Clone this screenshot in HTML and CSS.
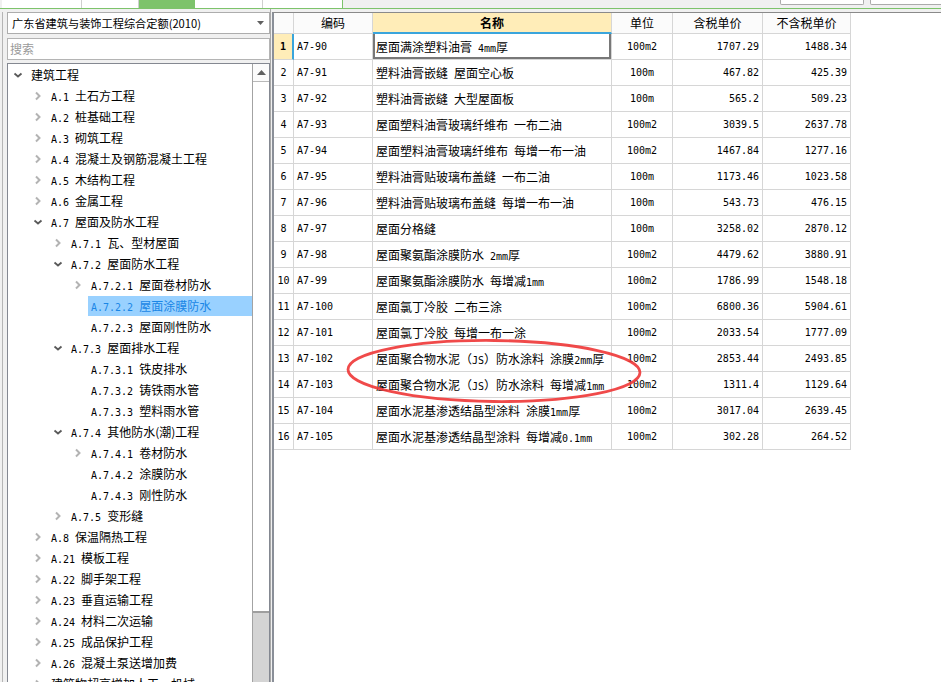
FILE: index.html
```html
<!DOCTYPE html>
<html lang="zh-CN">
<head>
<meta charset="utf-8">
<title>定额库</title>
<link rel="stylesheet" href="styles.css">
</head>
<body>
<div class="topbar">
  <div class="tabs">
    <div class="tab w80"></div>
    <div class="tab w57"></div>
    <div class="tab w56 active"></div>
    <div class="tab w68"></div>
    <div class="tab w80 last"></div>
  </div>
  <div class="topbtns">
    <div class="tbtn b1"></div>
    <div class="tbtn b2"></div>
  </div>
</div>
<div class="main">
  <div class="strip"><div class="strip-line"></div></div>
  <div class="left">
    <div class="select">
      <span class="select-text">广东省建筑与装饰工程综合定额(2010)</span>
      <svg class="select-arrow" width="7" height="4" viewBox="0 0 7 4"><path d="M0 0H7L3.5 4Z" fill="#606060"/></svg>
    </div>
    <div class="search">搜索</div>
    <div class="tree">
      <div class="tree-list">
        <div class="item l0"><svg class="chev" viewBox="0 0 10 10"><path class="open" d="M1.5 3.5L5 6.5L8.5 3.5"/></svg><span class="label">建筑工程</span></div>
        <div class="item l1"><svg class="chev" viewBox="0 0 10 10"><path class="closed" d="M3 1.5L6.5 5L3 8.5"/></svg><span class="label"><span class="m">A.1 </span>土石方工程</span></div>
        <div class="item l1"><svg class="chev" viewBox="0 0 10 10"><path class="closed" d="M3 1.5L6.5 5L3 8.5"/></svg><span class="label"><span class="m">A.2 </span>桩基础工程</span></div>
        <div class="item l1"><svg class="chev" viewBox="0 0 10 10"><path class="closed" d="M3 1.5L6.5 5L3 8.5"/></svg><span class="label"><span class="m">A.3 </span>砌筑工程</span></div>
        <div class="item l1"><svg class="chev" viewBox="0 0 10 10"><path class="closed" d="M3 1.5L6.5 5L3 8.5"/></svg><span class="label"><span class="m">A.4 </span>混凝土及钢筋混凝土工程</span></div>
        <div class="item l1"><svg class="chev" viewBox="0 0 10 10"><path class="closed" d="M3 1.5L6.5 5L3 8.5"/></svg><span class="label"><span class="m">A.5 </span>木结构工程</span></div>
        <div class="item l1"><svg class="chev" viewBox="0 0 10 10"><path class="closed" d="M3 1.5L6.5 5L3 8.5"/></svg><span class="label"><span class="m">A.6 </span>金属工程</span></div>
        <div class="item l1"><svg class="chev" viewBox="0 0 10 10"><path class="open" d="M1.5 3.5L5 6.5L8.5 3.5"/></svg><span class="label"><span class="m">A.7 </span>屋面及防水工程</span></div>
        <div class="item l2"><svg class="chev" viewBox="0 0 10 10"><path class="closed" d="M3 1.5L6.5 5L3 8.5"/></svg><span class="label"><span class="m">A.7.1 </span>瓦、型材屋面</span></div>
        <div class="item l2"><svg class="chev" viewBox="0 0 10 10"><path class="open" d="M1.5 3.5L5 6.5L8.5 3.5"/></svg><span class="label"><span class="m">A.7.2 </span>屋面防水工程</span></div>
        <div class="item l3"><svg class="chev" viewBox="0 0 10 10"><path class="closed" d="M3 1.5L6.5 5L3 8.5"/></svg><span class="label"><span class="m">A.7.2.1 </span>屋面卷材防水</span></div>
        <div class="item l3 sel"><span class="chev"></span><span class="label"><span class="m">A.7.2.2 </span>屋面涂膜防水</span></div>
        <div class="item l3"><span class="chev"></span><span class="label"><span class="m">A.7.2.3 </span>屋面刚性防水</span></div>
        <div class="item l2"><svg class="chev" viewBox="0 0 10 10"><path class="open" d="M1.5 3.5L5 6.5L8.5 3.5"/></svg><span class="label"><span class="m">A.7.3 </span>屋面排水工程</span></div>
        <div class="item l3"><span class="chev"></span><span class="label"><span class="m">A.7.3.1 </span>铁皮排水</span></div>
        <div class="item l3"><span class="chev"></span><span class="label"><span class="m">A.7.3.2 </span>铸铁雨水管</span></div>
        <div class="item l3"><span class="chev"></span><span class="label"><span class="m">A.7.3.3 </span>塑料雨水管</span></div>
        <div class="item l2"><svg class="chev" viewBox="0 0 10 10"><path class="open" d="M1.5 3.5L5 6.5L8.5 3.5"/></svg><span class="label"><span class="m">A.7.4 </span>其他防水(潮)工程</span></div>
        <div class="item l3"><svg class="chev" viewBox="0 0 10 10"><path class="closed" d="M3 1.5L6.5 5L3 8.5"/></svg><span class="label"><span class="m">A.7.4.1 </span>卷材防水</span></div>
        <div class="item l3"><span class="chev"></span><span class="label"><span class="m">A.7.4.2 </span>涂膜防水</span></div>
        <div class="item l3"><span class="chev"></span><span class="label"><span class="m">A.7.4.3 </span>刚性防水</span></div>
        <div class="item l2"><svg class="chev" viewBox="0 0 10 10"><path class="closed" d="M3 1.5L6.5 5L3 8.5"/></svg><span class="label"><span class="m">A.7.5 </span>变形缝</span></div>
        <div class="item l1"><svg class="chev" viewBox="0 0 10 10"><path class="closed" d="M3 1.5L6.5 5L3 8.5"/></svg><span class="label"><span class="m">A.8 </span>保温隔热工程</span></div>
        <div class="item l1"><svg class="chev" viewBox="0 0 10 10"><path class="closed" d="M3 1.5L6.5 5L3 8.5"/></svg><span class="label"><span class="m">A.21 </span>模板工程</span></div>
        <div class="item l1"><svg class="chev" viewBox="0 0 10 10"><path class="closed" d="M3 1.5L6.5 5L3 8.5"/></svg><span class="label"><span class="m">A.22 </span>脚手架工程</span></div>
        <div class="item l1"><svg class="chev" viewBox="0 0 10 10"><path class="closed" d="M3 1.5L6.5 5L3 8.5"/></svg><span class="label"><span class="m">A.23 </span>垂直运输工程</span></div>
        <div class="item l1"><svg class="chev" viewBox="0 0 10 10"><path class="closed" d="M3 1.5L6.5 5L3 8.5"/></svg><span class="label"><span class="m">A.24 </span>材料二次运输</span></div>
        <div class="item l1"><svg class="chev" viewBox="0 0 10 10"><path class="closed" d="M3 1.5L6.5 5L3 8.5"/></svg><span class="label"><span class="m">A.25 </span>成品保护工程</span></div>
        <div class="item l1"><svg class="chev" viewBox="0 0 10 10"><path class="closed" d="M3 1.5L6.5 5L3 8.5"/></svg><span class="label"><span class="m">A.26 </span>混凝土泵送增加费</span></div>
        <div class="item l1"><svg class="chev" viewBox="0 0 10 10"><path class="closed" d="M3 1.5L6.5 5L3 8.5"/></svg><span class="label">建筑物超高增加人工、机械</span></div>
      </div>
      <div class="vscroll">
        <div class="sb-up"><svg width="9" height="5" viewBox="0 0 9 5"><path d="M0 5L4.5 0L9 5Z" fill="#606060"/></svg></div>
        <div class="sb-thumb"></div>
        <div class="sb-track"></div>
      </div>
    </div>
  </div>
  <div class="splitter"></div>
  <div class="right">
    <div class="grid">
      <div class="c h"></div><div class="c h">编码</div><div class="c h hsel">名称</div><div class="c h">单位</div><div class="c h">含税单价</div><div class="c h">不含税单价</div>

      <div class="c rn rsel m">1</div><div class="c code m">A7-90</div><div class="c name focus">屋面满涂塑料油膏<span class="m"> 4mm</span>厚</div><div class="c unit m">100m2</div><div class="c num m">1707.29</div><div class="c num m">1488.34</div>
      <div class="c rn m">2</div><div class="c code m">A7-91</div><div class="c name">塑料油膏嵌缝<span class="m"> </span>屋面空心板</div><div class="c unit m">100m</div><div class="c num m">467.82</div><div class="c num m">425.39</div>
      <div class="c rn m">3</div><div class="c code m">A7-92</div><div class="c name">塑料油膏嵌缝<span class="m"> </span>大型屋面板</div><div class="c unit m">100m</div><div class="c num m">565.2</div><div class="c num m">509.23</div>
      <div class="c rn m">4</div><div class="c code m">A7-93</div><div class="c name">屋面塑料油膏玻璃纤维布<span class="m"> </span>一布二油</div><div class="c unit m">100m2</div><div class="c num m">3039.5</div><div class="c num m">2637.78</div>
      <div class="c rn m">5</div><div class="c code m">A7-94</div><div class="c name">屋面塑料油膏玻璃纤维布<span class="m"> </span>每增一布一油</div><div class="c unit m">100m2</div><div class="c num m">1467.84</div><div class="c num m">1277.16</div>
      <div class="c rn m">6</div><div class="c code m">A7-95</div><div class="c name">塑料油膏贴玻璃布盖缝<span class="m"> </span>一布二油</div><div class="c unit m">100m</div><div class="c num m">1173.46</div><div class="c num m">1023.58</div>
      <div class="c rn m">7</div><div class="c code m">A7-96</div><div class="c name">塑料油膏贴玻璃布盖缝<span class="m"> </span>每增一布一油</div><div class="c unit m">100m</div><div class="c num m">543.73</div><div class="c num m">476.15</div>
      <div class="c rn m">8</div><div class="c code m">A7-97</div><div class="c name">屋面分格缝</div><div class="c unit m">100m</div><div class="c num m">3258.02</div><div class="c num m">2870.12</div>
      <div class="c rn m">9</div><div class="c code m">A7-98</div><div class="c name">屋面聚氨酯涂膜防水<span class="m"> 2mm</span>厚</div><div class="c unit m">100m2</div><div class="c num m">4479.62</div><div class="c num m">3880.91</div>
      <div class="c rn m">10</div><div class="c code m">A7-99</div><div class="c name">屋面聚氨酯涂膜防水<span class="m"> </span>每增减<span class="m">1mm</span></div><div class="c unit m">100m2</div><div class="c num m">1786.99</div><div class="c num m">1548.18</div>
      <div class="c rn m">11</div><div class="c code m">A7-100</div><div class="c name">屋面氯丁冷胶<span class="m"> </span>二布三涂</div><div class="c unit m">100m2</div><div class="c num m">6800.36</div><div class="c num m">5904.61</div>
      <div class="c rn m">12</div><div class="c code m">A7-101</div><div class="c name">屋面氯丁冷胶<span class="m"> </span>每增一布一涂</div><div class="c unit m">100m2</div><div class="c num m">2033.54</div><div class="c num m">1777.09</div>
      <div class="c rn m">13</div><div class="c code m">A7-102</div><div class="c name">屋面聚合物水泥（<span class="m">JS</span>）防水涂料<span class="m"> </span>涂膜<span class="m">2mm</span>厚</div><div class="c unit m">100m2</div><div class="c num m">2853.44</div><div class="c num m">2493.85</div>
      <div class="c rn m">14</div><div class="c code m">A7-103</div><div class="c name">屋面聚合物水泥（<span class="m">JS</span>）防水涂料<span class="m"> </span>每增减<span class="m">1mm</span></div><div class="c unit m">100m2</div><div class="c num m">1311.4</div><div class="c num m">1129.64</div>
      <div class="c rn m">15</div><div class="c code m">A7-104</div><div class="c name">屋面水泥基渗透结晶型涂料<span class="m"> </span>涂膜<span class="m">1mm</span>厚</div><div class="c unit m">100m2</div><div class="c num m">3017.04</div><div class="c num m">2639.45</div>
      <div class="c rn m">16</div><div class="c code m">A7-105</div><div class="c name">屋面水泥基渗透结晶型涂料<span class="m"> </span>每增减<span class="m">0.1mm</span></div><div class="c unit m">100m2</div><div class="c num m">302.28</div><div class="c num m">264.52</div>
    </div>
  </div>
</div>
<svg class="annot" width="941" height="682" viewBox="0 0 941 682">
  <ellipse cx="494" cy="371" rx="146" ry="30.5" transform="rotate(0.6 494 371)" fill="none" stroke="#ef3b3b" stroke-width="2.8" stroke-opacity="0.92"/>
</svg>
</body>
</html>
```

FILE: styles.css
```css
html, body {
  margin: 0;
  padding: 0;
}
body {
  width: 941px;
  height: 682px;
  overflow: hidden;
  position: relative;
  background: #f0f0f0;
  font-family: "Noto Sans CJK SC", "Noto Sans", sans-serif;
  font-size: 12px;
  color: #000;
}
.m {
  font-family: "DejaVu Sans Mono", "Liberation Mono", monospace;
  font-size: 10px;
  white-space: pre;
}

/* top bar */
.topbar {
  height: 8px;
  border-bottom: 1px solid #7dc36b;
  display: flex;
  justify-content: space-between;
  overflow: hidden;
}
.tabs {
  display: flex;
  padding-left: 2px;
}
.tab {
  height: 8px;
  background: #fff;
  border-right: 1px solid #cfcfcf;
  box-sizing: border-box;
}
.tab.active { background: #7dc36b; border-right-color: #7dc36b; }
.tab.last { border-right-color: #7dc36b; }
.w80 { width: 80px; }
.w57 { width: 57px; }
.w56 { width: 56px; }
.w68 { width: 68px; }
.topbtns {
  display: flex;
  gap: 6px;
}
.tbtn {
  height: 5px;
  background: #fff;
  border: 1px solid #ababab;
  border-top: none;
  border-radius: 0 0 2px 2px;
  box-sizing: border-box;
}
.b1 { width: 84px; }
.b2 { width: 75px; margin-right: -4px; }

/* main area */
.main {
  display: flex;
  height: 673px;
}
.strip {
  width: 7px;
  flex: none;
  padding-top: 3px;
  box-sizing: border-box;
}
.strip-line {
  margin-left: 2px;
  width: 1px;
  height: 100%;
  background: #b5b5b5;
}
.left {
  width: 263px;
  flex: none;
  padding-top: 3px;
  display: flex;
  flex-direction: column;
  box-sizing: border-box;
}
.select {
  height: 22px;
  background: #fff;
  border: 1px solid #adadad;
  box-sizing: border-box;
  display: flex;
  align-items: center;
  padding: 0 5px 0 4px;
}
.select-text {
  flex: 1;
  font-size: 11.2px;
  line-height: 20px;
  white-space: nowrap;
}
.select-arrow { flex: none; }
.search {
  margin-top: 4px;
  height: 22px;
  background: #fff;
  border: 1px solid #b4b4b4;
  box-sizing: border-box;
  color: #9a9a9a;
  line-height: 20px;
  padding-left: 2px;
}
.tree {
  margin-top: 3px;
  flex: 1;
  background: #fff;
  border: 1px solid #848891;
  border-bottom: none;
  display: flex;
  overflow: hidden;
}
.tree-list {
  flex: 1;
  padding-top: 0;
  overflow: hidden;
}
.item {
  display: flex;
  align-items: center;
  height: 21px;
  white-space: nowrap;
}
.l0 { padding-left: 5px; }
.l1 { padding-left: 25px; }
.l2 { padding-left: 45px; }
.l3 { padding-left: 65px; }
.chev {
  width: 10px;
  height: 10px;
  flex: none;
  margin-right: 8px;
  display: block;
}
.chev .closed {
  fill: none;
  stroke: #b3b3b3;
  stroke-width: 2;
}
.chev .open {
  fill: none;
  stroke: #595959;
  stroke-width: 1.8;
}
.label {
  flex: 1;
  line-height: 21px;
  height: 21px;
}
.sel .label {
  background: #99d1ff;
  color: #1a86e6;
  margin-left: -3px;
  padding-left: 3px;
  height: 20px;
  line-height: 20px;
  margin-top: 1px;
}
.vscroll {
  width: 17px;
  flex: none;
  border-left: 1px solid #a3a3a3;
  box-sizing: border-box;
  display: flex;
  flex-direction: column;
}
.sb-up {
  height: 17px;
  border-bottom: 1px solid #b9b9b9;
  display: flex;
  align-items: center;
  justify-content: center;
  background: #fbfbfb;
  flex: none;
}
.sb-thumb {
  height: 529px;
  background: #fff;
  border-bottom: 2px solid #9e9e9e;
  flex: none;
}
.sb-track {
  flex: 1;
  background: #d4d4d4;
}
.splitter {
  width: 2px;
  flex: none;
  background: linear-gradient(to right, #a8a8a8 0 1px, #f0f0f0 1px);
}

/* right panel */
.right {
  flex: 1;
  margin-top: 3px;
  background: #fff;
  border-top: 1px solid #8a8a8a;
  border-left: 2px solid #8a8f98;
}
.grid {
  display: grid;
  grid-template-columns: 20px 79px 239px 61px 90px 88px;
  width: 577px;
}
.c {
  box-sizing: border-box;
  height: 26px;
  line-height: 25px;
  border-right: 1px solid #d6d6d6;
  border-bottom: 1px solid #d6d6d6;
  white-space: nowrap;
  overflow: hidden;
  background: #fff;
}
.h {
  height: 21px;
  line-height: 20px;
  text-align: center;
  background: #fbfbfb;
}
.hsel {
  background: #ffedb8;
  font-weight: bold;
  border-bottom: 2px solid #3aa5dc;
  line-height: 19px;
}
.rn { text-align: center; }
.rsel {
  background: #ffedb8;
  font-weight: bold;
  border-right: 2px solid #3aa5dc;
}
.code { padding-left: 3px; }
.name { padding-left: 3px; }
.unit { text-align: center; }
.num { text-align: right; padding-right: 3px; }
.focus {
  box-shadow: inset 2px 0 0 #787878, inset -2px 0 0 #787878, inset 0 -2px 0 #787878;
}

/* annotation overlay */
.annot {
  position: absolute;
  left: 0;
  top: 0;
  pointer-events: none;
}
```
